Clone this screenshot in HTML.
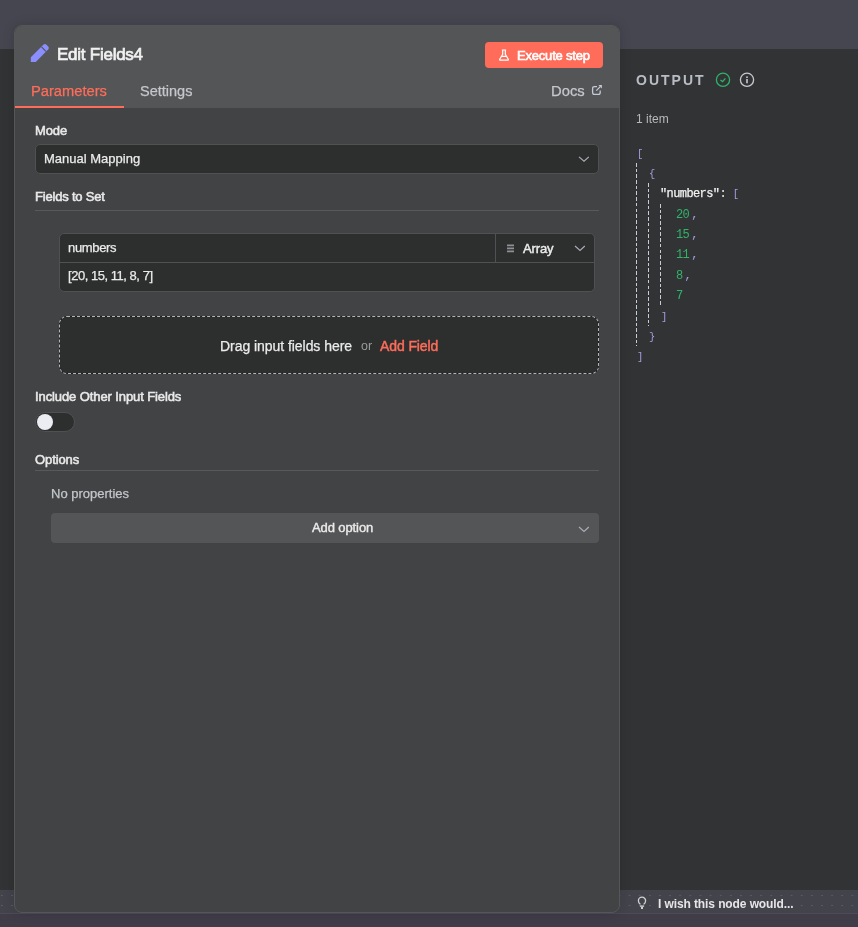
<!DOCTYPE html>
<html><head><meta charset="utf-8">
<style>
*{box-sizing:border-box;margin:0;padding:0}
html,body{width:858px;height:927px;overflow:hidden;background:#323334;font-family:"Liberation Sans",sans-serif}
.abs{position:absolute}
#top{left:0;top:0;width:858px;height:49px;background:#464650}
#bot{left:0;top:890px;width:858px;height:24px;background-color:#43434c;background-image:radial-gradient(circle at 1.8px 5.5px,#595964 0,#595964 0.6px,transparent 1.1px);background-size:10.13px 10px;border-bottom:1px solid #4c4b58}
#bot2{left:0;top:914px;width:858px;height:13px;background:#403c48}
#mid{left:0;top:49px;width:858px;height:841px;background:#323334}
#panel{left:14px;top:25px;width:606px;height:888px;background:#424344;border:1px solid #555657;border-radius:8px;overflow:hidden;box-shadow:0 0 12px rgba(0,0,0,.15)}
#hdr{left:0;top:0;width:606px;height:82px;background:#545556}
.t{position:absolute;white-space:nowrap;line-height:1;will-change:transform}
.md{-webkit-text-stroke:0.25px currentColor}
.lbl{font-size:13px;color:#e9e9ea;-webkit-text-stroke:0.55px #e9e9ea;letter-spacing:-0.1px}
.inp{position:absolute;background:#2d2e2e;border:1px solid #505152;border-radius:5px}
.line{position:absolute;height:1px;background:#58595a}
.mono{position:absolute;white-space:nowrap;line-height:1;will-change:transform;font-family:"Liberation Mono",monospace;font-size:12px;letter-spacing:-0.6px}
.cm{margin-left:2px}
.pb{color:#a49ee0}
.br{font-size:10.5px}.pg{color:#32b36b}.pw{color:#f2f2f2}
.dl{position:absolute;width:1px;background:repeating-linear-gradient(to bottom,#c8ccd4 0 3.6px,transparent 3.6px 5.7px)}
</style></head><body>
<div id="top" class="abs"></div>
<div id="mid" class="abs"></div>
<div id="bot" class="abs"></div>
<div id="bot2" class="abs"></div>

<!-- main panel -->
<div id="panel" class="abs">
  <div id="hdr" class="abs"></div>
  <div class="abs" style="left:0;top:80px;width:109px;height:2px;background:#ff6d5a"></div>
  <!-- pencil -->
  <svg class="abs" style="left:11.3px;top:14.8px" width="26" height="26" viewBox="0 0 26 26">
    <path d="M4.8,16.3 L17.6,3.6 Q18.9,2.5 20.2,3.6 L22.4,5.8 Q23.4,7.1 22.3,8.3 L9.8,21.05 L4.8,21.05 Z" fill="#8b8ffd"/>
    <path d="M15.5,5.9 L19.9,10.3" stroke="#545556" stroke-width="1.2"/>
  </svg>
  <div class="t" style="left:42px;top:20px;font-size:17px;color:#f1f1f1;-webkit-text-stroke:0.7px #f1f1f1;letter-spacing:-0.25px">Edit Fields4</div>
  <!-- execute -->
  <div class="abs" style="left:470px;top:16px;width:118px;height:26px;background:#ff6d5a;border-radius:4px"></div>
  <svg class="abs" style="left:483px;top:22px" width="14" height="15" viewBox="0 0 14 15">
    <path d="M3.9,2 H8.1 M4.7,2 V6.3 L1.7,11.2 Q1.2,12.2 2.4,12.2 H9.6 Q10.8,12.2 10.3,11.2 L7.3,6.3 V2 M3.2,8.3 H8.8" stroke="#fff" stroke-width="1.2" fill="none" stroke-linejoin="round"/>
  </svg>
  <div class="t" style="left:502px;top:23px;font-size:13px;color:#fff;-webkit-text-stroke:0.6px #fff;letter-spacing:-0.2px">Execute step</div>
  <!-- tabs -->
  <div class="t md" style="left:16px;top:58px;font-size:14.7px;color:#ff6d5a">Parameters</div>
  <div class="t md" style="left:125px;top:58px;font-size:14.5px;color:#c5c7cc">Settings</div>
  <div class="t md" style="left:536px;top:58px;font-size:14.8px;color:#c5c7cc">Docs</div>
  <svg class="abs" style="left:575px;top:57px" width="14" height="14" viewBox="0 0 14 14">
    <path d="M7,3.6 H4.5 Q2.6,3.6 2.6,5.5 V9.4 Q2.6,11.3 4.5,11.3 H8.4 Q10.2,11.3 10.2,9.4 V7.5 M6.3,7.6 L10.5,3.4" stroke="#c5c9d5" stroke-width="1.3" fill="none"/>
    <path d="M8.4,2.1 H11.9 V5.6 Z" fill="#c5c9d5"/>
  </svg>

  <!-- Mode -->
  <div class="t lbl" style="left:20px;top:98px">Mode</div>
  <div class="inp" style="left:20px;top:118px;width:564px;height:30px"></div>
  <div class="t md" style="left:29px;top:126px;font-size:13px;color:#ebebeb">Manual Mapping</div>
  <svg class="abs" style="left:560px;top:126px" width="14" height="14" viewBox="0 0 14 14">
    <path d="M4.5,4.9 L9.5,9.3 L14.3,4.9" stroke="#a9acb4" stroke-width="1.2" fill="none" transform="translate(-0.5,0)"/>
  </svg>

  <div class="t lbl" style="left:20px;top:164px;letter-spacing:-0.2px">Fields to Set</div>
  <div class="line" style="left:20px;top:184px;width:564px"></div>

  <div class="inp" style="left:44px;top:207px;width:536px;height:59px"></div>
  <div class="abs" style="left:45px;top:236px;width:534px;height:1px;background:#505152"></div>
  <div class="abs" style="left:480px;top:208px;width:1px;height:28px;background:#505152"></div>
  <div class="t md" style="left:53px;top:215px;font-size:13px;color:#ebebeb;letter-spacing:-0.33px">numbers</div>
  <div class="t md" style="left:53px;top:243px;font-size:13px;color:#ebebeb;letter-spacing:-0.47px">[20, 15, 11, 8, 7]</div>
  <svg class="abs" style="left:491px;top:218px" width="9" height="9" viewBox="0 0 9 9">
    <path d="M1,1.3 H8 M1,4.3 H8 M1,7.3 H8" stroke="#8f9093" stroke-width="1.7"/>
  </svg>
  <div class="t" style="left:508px;top:216px;font-size:13px;color:#ebebeb;-webkit-text-stroke:0.45px #ebebeb;letter-spacing:-0.15px">Array</div>
  <svg class="abs" style="left:556px;top:215px" width="14" height="14" viewBox="0 0 14 14">
    <path d="M4.5,5 L9.5,9.4 L14.3,5" stroke="#a9acb4" stroke-width="1.2" fill="none" transform="translate(-0.5,0)"/>
  </svg>

  <div class="abs" style="left:44px;top:290px;width:540px;height:58px;background:linear-gradient(#2d2e2e,#2d2e2e) padding-box,#1d1d1e border-box;border:1px dashed #b4b5b7;border-radius:8px"></div>
  <div class="t md" style="left:205px;top:313px;font-size:14px;color:#ebebeb;letter-spacing:-0.05px">Drag input fields here</div>
  <div class="t" style="left:346px;top:314px;font-size:12.5px;color:#9a9b9c">or</div>
  <div class="t" style="left:365px;top:313px;font-size:14px;color:#ff6d5a;-webkit-text-stroke:0.45px #ff6d5a;letter-spacing:-0.1px">Add Field</div>

  <div class="t lbl" style="left:20px;top:364px">Include Other Input Fields</div>
  <div class="abs" style="left:20px;top:386px;width:40px;height:20px;background:#2d2e2e;border:1px solid #4f5051;border-radius:10px"></div>
  <div class="abs" style="left:22px;top:388px;width:16px;height:16px;background:#ececf3;border-radius:50%"></div>

  <div class="t lbl" style="left:20px;top:427px">Options</div>
  <div class="line" style="left:20px;top:444px;width:564px"></div>
  <div class="t md" style="left:36px;top:461px;font-size:13px;color:#c3c6cc">No properties</div>
  <div class="abs" style="left:36px;top:487px;width:548px;height:30px;background:#545556;border-radius:4px"></div>
  <div class="t" style="left:297px;top:495px;font-size:13px;color:#ebebeb;-webkit-text-stroke:0.4px #ebebeb;letter-spacing:-0.1px">Add option</div>
  <svg class="abs" style="left:560px;top:496px" width="14" height="14" viewBox="0 0 14 14">
    <path d="M4.5,5 L9.5,9.4 L14.3,5" stroke="#a9acb4" stroke-width="1.2" fill="none" transform="translate(-0.5,0)"/>
  </svg>
</div>

<!-- output -->
<div class="t" style="left:636px;top:73px;font-size:14px;font-weight:bold;letter-spacing:2.0px;color:#b9bcc4">OUTPUT</div>
<svg class="abs" style="left:714px;top:71px" width="18" height="18" viewBox="0 0 18 18">
  <circle cx="9" cy="8.8" r="6.6" stroke="#2fb36a" stroke-width="1.3" fill="none"/>
  <path d="M6.4,9 L8.6,10.6 L11.4,7.4" stroke="#2fb36a" stroke-width="1.3" fill="none"/>
</svg>
<svg class="abs" style="left:738px;top:71px" width="18" height="18" viewBox="0 0 18 18">
  <circle cx="9" cy="8.8" r="6.6" stroke="#c8cad3" stroke-width="1.3" fill="none"/>
  <path d="M9,8 V12.2" stroke="#c8cad3" stroke-width="1.6"/>
  <circle cx="9" cy="6.2" r="0.9" fill="#c8cad3"/>
</svg>
<div class="t" style="left:636px;top:113px;font-size:12px;color:#b8b9ba">1 item</div>

<!-- json -->
<div class="mono pb br" style="left:636.5px;top:149px">[</div>
<div class="mono pb br" style="left:648.5px;top:169px">{</div>
<div class="mono" style="left:660px;top:188px"><span class="pw md">"numbers"</span><span class="pw">: </span><span class="pb br">[</span></div>
<div class="mono" style="left:676px;top:209px"><span class="pg">20</span><span class="pb cm">,</span></div>
<div class="mono" style="left:676px;top:229px"><span class="pg">15</span><span class="pb cm">,</span></div>
<div class="mono" style="left:676px;top:249px"><span class="pg">11</span><span class="pb cm">,</span></div>
<div class="mono" style="left:676px;top:270px"><span class="pg">8</span><span class="pb cm">,</span></div>
<div class="mono" style="left:676px;top:290px"><span class="pg">7</span></div>
<div class="mono pb br" style="left:661px;top:312px">]</div>
<div class="mono pb br" style="left:649px;top:332px">}</div>
<div class="mono pb br" style="left:637px;top:352px">]</div>
<div class="dl" style="left:636px;top:163px;height:183px"></div>
<div class="dl" style="left:648px;top:183px;height:143px"></div>
<div class="dl" style="left:660px;top:204px;height:102px"></div>

<!-- bottom -->
<svg class="abs" style="left:636px;top:895px" width="12" height="16" viewBox="0 0 12 16">
  <path d="M4.4,9.4 Q2.4,8.4 2.4,5.8 A3.6,3.6 0 0 1 9.6,5.8 Q9.6,8.4 7.6,9.4" stroke="#d0d0d0" stroke-width="1.3" fill="none"/>
  <rect x="3.9" y="10.4" width="4.2" height="1.4" fill="#d0d0d0"/>
  <rect x="5" y="11.8" width="2" height="2.2" fill="#d0d0d0"/>
</svg>
<div class="t" style="left:658px;top:898px;font-size:12px;font-weight:bold;color:#e6e6e6;letter-spacing:-0.1px">I wish this node would...</div>
</body></html>
